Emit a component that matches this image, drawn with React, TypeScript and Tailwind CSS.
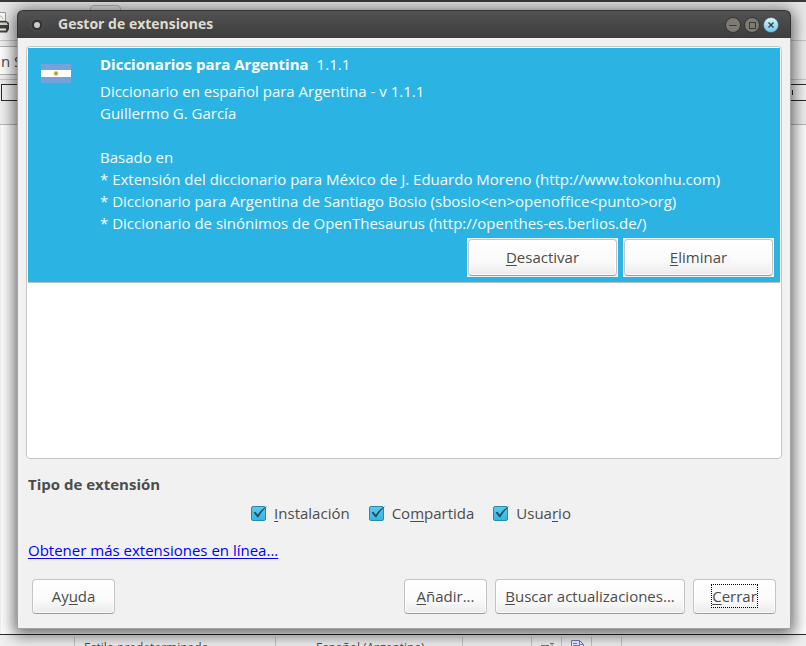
import type { ReactNode } from "react";

const uiFont = "font-['Open_Sans','Noto_Sans',sans-serif]";

function Mnemonic({ children }: { children: ReactNode }) {
  return (
    <span className="underline decoration-1 underline-offset-2 [text-decoration-skip-ink:none]">
      {children}
    </span>
  );
}

function PushButton({ className, children }: { className: string; children: ReactNode }) {
  return (
    <button
      type="button"
      className={`flex items-center justify-center rounded-[4px] border border-[#c4c4c4] border-b-[#9c9c9c] bg-linear-to-b from-white via-[#fafafa] via-60% to-[#ebebeb] pb-px text-[15px] leading-[22px] text-[#4c4c4c] shadow-[inset_0_0_0_1px_rgba(255,255,255,0.8)] ${className}`}
    >
      {children}
    </button>
  );
}

function TickBox({ id, children }: { id: string; children: ReactNode }) {
  return (
    <div className="flex items-center gap-2">
      <span className="relative size-[15px]">
        <input
          id={id}
          type="checkbox"
          defaultChecked
          className="peer block size-[15px] appearance-none rounded-[2px] border border-[#2b88a8] bg-linear-to-b from-[#5cc8ec] to-[#2bb8e8]"
        />
        <svg
          viewBox="0 0 18 17"
          className="pointer-events-none absolute -top-px left-0 hidden h-[17px] w-[18px] peer-checked:block"
        >
          <path d="M2.6 7.4 4.4 6.800 6.8 9.8C9.4 6 12.200 3 16.400 1 12.600 4.400 9.800 8.2 7.400 12.200H6.2Z" fill="#274c5c" />
        </svg>
      </span>
      <label htmlFor={id}>{children}</label>
    </div>
  );
}

function Flag() {
  return (
    <svg viewBox="0 0 30 19" className="h-[19px] w-[30px]" role="img" aria-label="Argentina">
      <rect width="30" height="19" fill="#74a3dc" />
      <rect y="6" width="30" height="7" fill="#fff" />
      <circle cx="15" cy="9.5" r="2.4" fill="#d9c67c" />
      <circle cx="15" cy="9.5" r="1.4" fill="#b5953c" />
    </svg>
  );
}

function WindowControls() {
  return (
    <div className="flex items-center gap-[3px]">
      <button type="button" aria-label="Minimizar">
        <svg viewBox="0 0 16 16" className="size-4">
          <circle cx="8" cy="8" r="7.5" fill="#7d7b74" stroke="#34342f" />
          <path d="M4.5 8.5h7" stroke="#3a3935" />
        </svg>
      </button>
      <button type="button" aria-label="Maximizar">
        <svg viewBox="0 0 16 16" className="size-4">
          <circle cx="8" cy="8" r="7.5" fill="#7d7b74" stroke="#34342f" />
          <rect x="5.5" y="5.5" width="6" height="6" fill="none" stroke="#3a3935" />
        </svg>
      </button>
      <button type="button" aria-label="Cerrar ventana">
        <svg viewBox="0 0 16 16" className="size-4">
          <defs>
            <linearGradient id="closeFill" x1="0" y1="0" x2="0" y2="1">
              <stop offset="0" stopColor="#e4f7fe" />
              <stop offset="1" stopColor="#6cc6ea" />
            </linearGradient>
          </defs>
          <circle cx="8" cy="8" r="7.5" fill="url(#closeFill)" stroke="#35535f" strokeWidth="0.6" />
          <path d="m5.5 5.5 5 5m0-5-5 5" stroke="#2f4048" strokeWidth="1.4" />
        </svg>
      </button>
    </div>
  );
}

function WriterWindow() {
  return (
    <div className="flex h-full flex-col bg-[#f0f0f0]" aria-hidden="true">
      <div className="h-0.5 shrink-0 bg-[#3a3a38]" />
      <div className="flex h-[39px] shrink-0 items-start border-b border-[#c8c8c8] bg-linear-to-b from-[#e6e6e6] to-[#f2f2f2]">
        <svg viewBox="0 0 9 24" className="mt-2 h-6 w-[9px]">
          <path d="M-1 2.500h6.500V11H-1z" fill="#fafafa" stroke="#9b9b9b" />
          <path d="M0 6h1l2 3" stroke="#a9b5a9" fill="none" />
          <path d="M0 11h6.500L9 13v6l-2 3.500H0z" fill="#3f423e" />
          <path d="M0 12.500h6.500L8 15H0z" fill="#d5d8d2" />
          <path d="M0 18.500h6v2H0z" fill="#ecece8" />
        </svg>
        <div className="mt-[3px] ml-[81px] h-8 w-[31px] rounded-[4px] border border-[#b0b0b0] bg-[#e2e2e2]" />
      </div>
      <div className="flex h-[39px] shrink-0 items-center border-b border-[#c8c8c8]">
        <div className="h-[29px] w-40 overflow-hidden border-y border-[#b5b5b5] bg-white pl-px text-[15px] leading-7 whitespace-nowrap text-[#4c4c4c]">
          n Sans
        </div>
      </div>
      <div className="flex h-[45px] shrink-0 items-start border-b border-[#b8b8b8] pt-1 pl-px">
        <div className="flex h-[17px] flex-1 items-center justify-end border border-r-0 border-[#2a2a2a] bg-[#f4f4f4] pr-[13px]">
          <span className="h-[5px] w-px bg-[#2a2a2a]" />
        </div>
      </div>
      <div className="ml-px flex-1 bg-white" />
      <div className="flex h-3 shrink-0 overflow-hidden border-t border-[#2a2a2a] bg-[#f0f0f0] pt-0.5 text-[12px] leading-[18px] whitespace-nowrap text-[#4c4c4c]">
        <div className="h-4 w-[75px] border-r border-[#c4c4c4]" />
        <div className="h-4 w-[201px] border-r border-[#c4c4c4] pt-0.5 pl-[9px]">Estilo predeterminado</div>
        <div className="h-4 w-[187px] border-r border-[#c4c4c4] pt-0.5 pl-10">Español (Argentina)</div>
        <div className="h-4 w-[69px] border-r border-[#c4c4c4]" />
        <div className="h-4 w-[30px] border-r border-[#c4c4c4] pt-[5px] pl-2">
          <svg viewBox="0 0 16 8" className="h-2 w-4">
            <path d="M1 3.500h8M10 1.500h4M12 1.500v7" stroke="#777" fill="none" />
          </svg>
        </div>
        <div className="h-4 w-[30px] border-r border-[#c4c4c4] pt-[3px] pl-2">
          <svg viewBox="0 0 16 16" className="size-4">
            <path d="M1.500.5h8l4 4v11h-12z" fill="#f4f4ff" stroke="#7d7bd0" />
            <path d="M9.500.5v4h4M3 3.500h4M3 5.500h7" stroke="#7d7bd0" fill="none" />
          </svg>
        </div>
        <div className="h-4 w-[30px] border-r border-[#c4c4c4]" />
      </div>
    </div>
  );
}

export default function App() {
  return (
    <div className={`relative h-screen overflow-hidden ${uiFont}`}>
      <WriterWindow />

      <section
        role="dialog"
        aria-labelledby="dialog-title"
        className="absolute top-2.5 right-[15px] bottom-[17px] left-[17px] flex flex-col rounded-t-[7px] border border-t-0 border-[#a2a2a2] bg-[#f1f1f1] text-[15px] leading-[22px] text-[#4c4c4c] shadow-[0_3px_16px_3px_rgba(0,0,0,0.6)]"
      >
        <header className="-mx-px flex h-7 shrink-0 items-center rounded-t-[6px] border border-b-0 border-[#333] bg-linear-to-b from-[#525252] to-[#3d3d3d] pr-[11px] pl-3">
          <svg viewBox="0 0 14 14" className="size-3.5">
            <circle cx="7" cy="7" r="6" fill="#333" stroke="#666" strokeWidth="0.6" />
            <circle cx="7" cy="7" r="3" fill="#cfcdc6" />
          </svg>
          <h1 id="dialog-title" className="flex-1 pb-0.5 pl-3.5 text-[14px] font-bold text-[#dfdbd2]">
            Gestor de extensiones
          </h1>
          <WindowControls />
        </header>

        <main className="flex flex-1 flex-col px-2 pt-2 pb-3.5">
          <div className="flex-1 rounded-[4px] border border-[#c6c6c6] bg-white p-px">
            <article className="flex border-b border-[#c0c0c0] bg-[#2bb4e3] pt-[5px] pr-1.5 pb-[5px] pl-[13px] text-[#f4fbfe]">
              <div className="w-[59px] shrink-0 pt-[11px]">
                <Flag />
              </div>
              <div className="flex-1">
                <h2 className="mb-[5px] flex gap-2">
                  <strong className="text-white">Diccionarios para Argentina</strong>
                  <span>1.1.1</span>
                </h2>
                <p>Diccionario en español para Argentina - v 1.1.1</p>
                <p>Guillermo G. García</p>
                <p className="mt-[22px]">Basado en</p>
                <ul>
                  <li>* Extensión del diccionario para México de J. Eduardo Moreno (http://www.tokonhu.com)</li>
                  <li>* Diccionario para Argentina de Santiago Bosio (sbosio&lt;en&gt;openoffice&lt;punto&gt;org)</li>
                  <li>* Diccionario de sinónimos de OpenThesaurus (http://openthes-es.berlios.de/)</li>
                </ul>
                <div className="mt-1 flex justify-end gap-[5px]">
                  <div className="bg-[#f1f1f1] p-px">
                    <PushButton className="h-[37px] w-[149px]">
                      <Mnemonic>D</Mnemonic>esactivar
                    </PushButton>
                  </div>
                  <div className="bg-[#f1f1f1] p-px">
                    <PushButton className="h-[37px] w-[149px]">
                      <Mnemonic>E</Mnemonic>liminar
                    </PushButton>
                  </div>
                </div>
              </div>
            </article>
          </div>

          <fieldset className="mt-3.5">
            <legend className="pl-0.5 font-bold">Tipo de extensión</legend>
            <div className="mt-[7px] flex justify-center gap-[19px] pl-3.5">
              <TickBox id="instalacion">
                <Mnemonic>I</Mnemonic>nstalación
              </TickBox>
              <TickBox id="compartida">
                Co<Mnemonic>m</Mnemonic>partida
              </TickBox>
              <TickBox id="usuario">
                Usua<Mnemonic>r</Mnemonic>io
              </TickBox>
            </div>
          </fieldset>

          <a
            href="#extensiones"
            className="mt-[15px] ml-0.5 self-start text-[#0000ff] underline decoration-1 underline-offset-2 [text-decoration-skip-ink:none]"
          >
            Obtener más extensiones en línea...
          </a>

          <footer className="mt-[18px] flex gap-2 px-1.5">
            <PushButton className="mr-auto h-[35px] w-[83px]">
              Ay<Mnemonic>u</Mnemonic>da
            </PushButton>
            <PushButton className="h-[35px] w-[83px]">
              <Mnemonic>A</Mnemonic>ñadir...
            </PushButton>
            <PushButton className="h-[35px] w-[190px]">
              <Mnemonic>B</Mnemonic>uscar actualizaciones...
            </PushButton>
            <PushButton className="h-[35px] w-[83px]">
              <span className="border border-dotted border-black">
                <Mnemonic>C</Mnemonic>errar
              </span>
            </PushButton>
          </footer>
        </main>
      </section>
    </div>
  );
}
